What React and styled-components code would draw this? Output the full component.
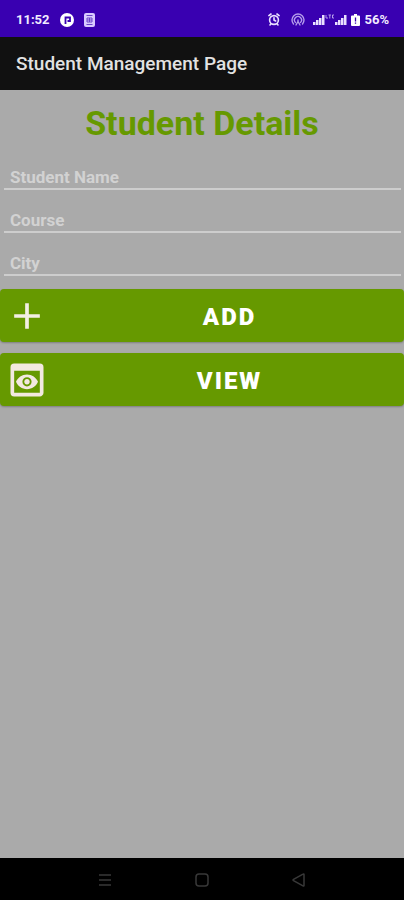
import React from "react";
import styled, { createGlobalStyle } from "styled-components";

const GlobalStyle = createGlobalStyle`
  * { box-sizing: border-box; }
  body { margin: 0; background: #aaaaaa; font-family: Roboto, sans-serif; }
`;

const Screen = styled.div`
  display: flex;
  flex-direction: column;
  min-height: 100vh;
  background: #aaaaaa;
`;

const StatusBar = styled.div`
  display: flex;
  align-items: center;
  justify-content: space-between;
  height: 37px;
  padding: 2px 15px 0 16px;
  background: #3900b1;
  color: #f1ebff;
  font-size: 13px;
  font-weight: 700;
  line-height: 16px;
`;

const StatusGroup = styled.div`
  display: flex;
  align-items: center;
  gap: ${({ $gap }) => $gap}px;
`;

const Icon = styled.svg`
  display: block;
  flex: none;
  width: ${({ $w }) => $w}px;
  height: ${({ $h }) => $h}px;
`;

const AppBar = styled.header`
  display: flex;
  align-items: center;
  height: 53px;
  padding: 0 16px;
  background: #111111;
`;

const AppTitle = styled.h1`
  margin: 0;
  color: #e2e2e2;
  font-size: 19px;
  font-weight: 500;
  line-height: 24px;
`;

const Content = styled.main`
  flex: 1;
`;

const Heading = styled.h2`
  margin: 0;
  padding: 13px 0 12px;
  color: #669900;
  font-size: 34px;
  font-weight: 700;
  line-height: 40px;
  text-align: center;
`;

const Form = styled.form`
  display: flex;
  flex-direction: column;
`;

const Fields = styled.div`
  display: flex;
  flex-direction: column;
  gap: 8px;
  padding: 0 3px 0 4px;
`;

const Field = styled.input`
  width: 100%;
  height: 35px;
  padding: 12px 6px 1px;
  border: 0;
  border-bottom: 2px solid #cdcdcd;
  border-radius: 0;
  outline: 0;
  background: transparent;
  color: #ffffff;
  font: 700 17px/20px Roboto, sans-serif;

  &::placeholder {
    color: #d2d2d2;
    opacity: 1;
  }
`;

const Actions = styled.div`
  display: flex;
  flex-direction: column;
  gap: 11px;
  padding-top: 13px;
`;

const ActionButton = styled.button`
  display: flex;
  align-items: center;
  height: 53px;
  padding: 0 0 0 5px;
  border: 0;
  border-radius: 4px;
  background: #669900;
  box-shadow: 0 1px 2px rgba(0, 0, 0, 0.25);
  color: #ffffff;
  font: 900 24px/28px Roboto, sans-serif;
  letter-spacing: 2px;
  text-transform: uppercase;
`;

const ActionLabel = styled.span`
  flex: 1;
  padding: 2px 0 0 6px;
  text-align: center;
`;

const NavBar = styled.nav`
  display: flex;
  align-items: center;
  justify-content: center;
  gap: 73px;
  height: 42px;
  padding-top: 2px;
  background: #000000;
`;

const NavButton = styled.button`
  display: grid;
  place-items: center;
  width: 24px;
  height: 24px;
  padding: 0;
  border: 0;
  background: transparent;
  color: #383838;
`;

const PocketIcon = () => (
  <Icon $w={14} $h={14} viewBox="0 0 14 14" aria-hidden="true">
    <circle cx="7" cy="7" r="7" fill="#fff" />
    <path d="M5.500 11V4.500H10V8H7.500" fill="none" stroke="#3900b1" strokeWidth="1.8" />
  </Icon>
);

const CardIcon = () => (
  <Icon $w={11} $h={14} viewBox="0 0 11 14" aria-hidden="true">
    <rect width="11" height="14" rx="2" fill="#d8caff" />
    <path d="M2.5 2.5h6M2.5 11.5h6M3 5h5v4H3zM3 7h5M5.5 5v4" fill="none" stroke="#6a44c8" />
  </Icon>
);

const AlarmIcon = () => (
  <Icon $w={12} $h={13} viewBox="0 0 12 13" aria-hidden="true">
    <g fill="none" stroke="#e9e0ff" strokeWidth="1.6" strokeLinecap="round">
      <circle cx="6" cy="7" r="4.4" />
      <path d="M.9 2.6 3 1M11.1 2.6 9 1M6 4.8V7l1.6 1M3 10.8l-1 1.2M9 10.8l1 1.2" />
    </g>
  </Icon>
);

const HotspotIcon = () => (
  <Icon $w={14} $h={13} viewBox="0 0 14 13" aria-hidden="true">
    <g fill="none" stroke="#b59ceb" strokeWidth="1.4" strokeLinecap="round">
      <path d="M2.500 11a6 6 0 1 1 9 0" />
      <path d="M4.4 9.4a3.5 3.5 0 1 1 5.2 0" />
      <path d="M7 7v1M5 12l2-3.5L9 12" />
    </g>
  </Icon>
);

const SignalIcon = () => (
  <Icon $w={34} $h={12} viewBox="0 0 34 12" aria-hidden="true">
    <path
      d="M0 8h2.500v3H0zM3 6h2.500v5H3zM6 4h2.500v7H6zM9 1h2.500v10H9zM22 8h2.500v3H22zM25 6h2.500v5H25zM28 4h2.500v7H28zM31 1h2.500v10H31z"
      fill="#e9e0ff"
    />
    <path d="M13 1v3h2M15.500 1h2.500M16.800 1v3.500M21 1h-1.500v3H21" fill="none" stroke="#b59ceb" strokeWidth="1" />
  </Icon>
);

const BatteryIcon = () => (
  <Icon $w={9} $h={12} viewBox="0 0 9 12" aria-hidden="true">
    <path d="M3 0h3v1.500h2q1 0 1 1V11q0 1-1 1H1q-1 0-1-1V2.500q0-1 1-1h2z" fill="#fff" />
    <path d="M4.500 3.500v4M4.500 8.500v1.300" stroke="#3900b1" strokeWidth="1.300" />
  </Icon>
);

const AddIcon = () => (
  <Icon $w={44} $h={44} viewBox="0 0 24 24" fill="#f3efe4" aria-hidden="true">
    <path d="M19 13h-6v6h-2v-6H5v-2h6V5h2v6h6v2z" />
  </Icon>
);

const PreviewIcon = () => (
  <Icon $w={44} $h={44} viewBox="0 0 24 24" fill="#f3e9e0" aria-hidden="true">
    <path d="M19 3H5a2 2 0 0 0-2 2v14a2 2 0 0 0 2 2h14c1.100 0 2-.9 2-2V5a2 2 0 0 0-2-2zm0 16H5V7h14v12zm-5.500-6c0 .83-.67 1.500-1.500 1.500s-1.500-.67-1.500-1.500.67-1.500 1.500-1.500 1.500.67 1.500 1.500zM12 9c-2.730 0-5.060 1.660-6 4 .94 2.340 3.270 4 6 4s5.060-1.660 6-4c-.94-2.340-3.270-4-6-4zm0 6.500a2.500 2.500 0 0 1 0-5 2.500 2.500 0 0 1 0 5z" />
  </Icon>
);

const fields = ["Student Name", "Course", "City"];

export default function App() {
  return (
    <Screen>
      <GlobalStyle />
      <StatusBar>
        <StatusGroup $gap={10}>
          <span>11:52</span>
          <PocketIcon />
          <CardIcon />
        </StatusGroup>
        <StatusGroup $gap={8}>
          <StatusGroup $gap={11}>
            <AlarmIcon />
            <HotspotIcon />
          </StatusGroup>
          <StatusGroup $gap={4}>
            <SignalIcon />
            <BatteryIcon />
            <span>56%</span>
          </StatusGroup>
        </StatusGroup>
      </StatusBar>
      <AppBar>
        <AppTitle>Student Management Page</AppTitle>
      </AppBar>
      <Content>
        <Heading>Student Details</Heading>
        <Form onSubmit={(event) => event.preventDefault()}>
          <Fields>
            {fields.map((name) => (
              <Field key={name} type="text" placeholder={name} aria-label={name} />
            ))}
          </Fields>
          <Actions>
            <ActionButton type="submit">
              <AddIcon />
              <ActionLabel>Add</ActionLabel>
            </ActionButton>
            <ActionButton type="button">
              <PreviewIcon />
              <ActionLabel>View</ActionLabel>
            </ActionButton>
          </Actions>
        </Form>
      </Content>
      <NavBar aria-label="System navigation">
        <NavButton type="button" aria-label="Recent apps">
          <Icon $w={14} $h={14} viewBox="0 0 14 14" aria-hidden="true">
            <path d="M1 2h12M1 7h12M1 12h12" stroke="currentColor" strokeWidth="1.300" />
          </Icon>
        </NavButton>
        <NavButton type="button" aria-label="Home">
          <Icon $w={14} $h={14} viewBox="0 0 14 14" aria-hidden="true">
            <rect x="1" y="1" width="12" height="12" rx="3" fill="none" stroke="currentColor" strokeWidth="1.500" />
          </Icon>
        </NavButton>
        <NavButton type="button" aria-label="Back">
          <Icon $w={14} $h={14} viewBox="0 0 14 14" aria-hidden="true">
            <path d="M12 1.500v11q0 1-1 .4L1.500 7.600q-.9-.6 0-1.200L11 1.100q1-.6 1 .4z" fill="none" stroke="currentColor" strokeWidth="1.500" />
          </Icon>
        </NavButton>
      </NavBar>
    </Screen>
  );
}
